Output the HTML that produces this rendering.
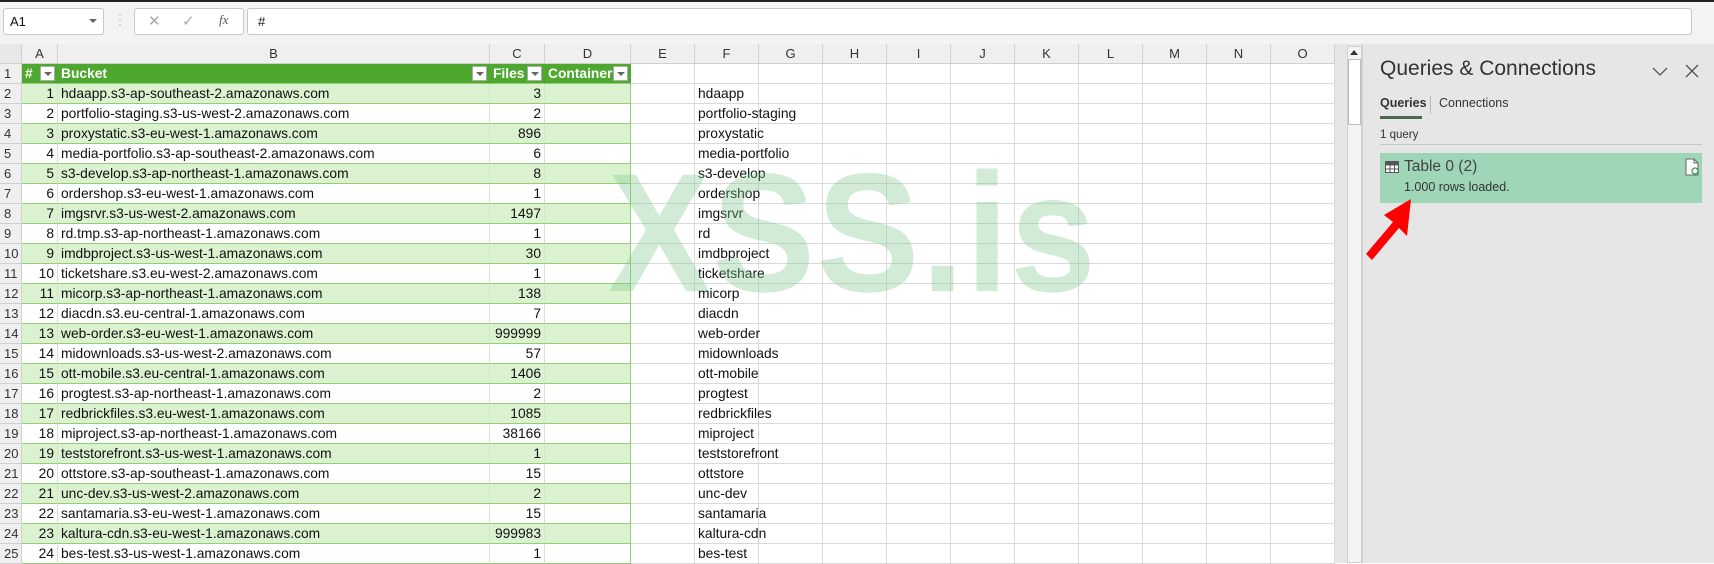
<!DOCTYPE html>
<html><head><meta charset="utf-8">
<style>
*{box-sizing:border-box;margin:0;padding:0}
body{width:1714px;height:563px;overflow:hidden;background:#fff;font-family:"Liberation Sans",sans-serif;position:relative;color:#111}
.top{position:absolute;left:0;top:0;width:1714px;height:44px;background:#f3f3f3;border-top:2px solid #222}
.box{position:absolute;background:#fff;border:1px solid #c8c8c8;border-radius:3px}
table{position:absolute;left:0;top:44px;width:1335px;border-collapse:separate;border-spacing:0;table-layout:fixed;font-size:13.8px}
td,th{height:20px;border-right:1px solid #d9d9d9;border-bottom:1px solid #d9d9d9;padding:0 3px;white-space:nowrap;overflow:hidden;font-weight:normal;line-height:19px;position:relative}
td{overflow:visible}
thead th{height:19px;background:#efefef;color:#333;font-size:13px;text-align:center;border-color:#d0d0d0}
tbody th{background:#efefef;color:#333;font-size:13px;text-align:left;padding-left:4px;border-color:#d0d0d0}
.n{text-align:right}
tr.g td.t{background:#daf2d0}
td.t{border-right-color:#cfe8c5;border-bottom-color:#8ed073}
td.t4{border-right-color:#8ed073}
tr.h td.t{background:#4ea72e;color:#fff;font-weight:bold;border-right-color:#4ea72e;overflow:hidden}
.dd{position:absolute;right:2px;top:2px;width:15px;height:15px;background:#fff;border:1px solid #aaa}
.dd:after{content:"";position:absolute;left:3px;top:5px;border-left:4px solid transparent;border-right:4px solid transparent;border-top:4px solid #666}
.wm{position:absolute;left:608px;top:135px;font-size:169px;font-weight:bold;color:rgba(130,200,140,0.36);transform:scaleX(0.91);transform-origin:0 0;letter-spacing:2px;pointer-events:none;z-index:2}
.panel{position:absolute;left:1362px;top:44px;width:352px;height:519px;background:#e6e6e6;border-left:1px solid #cfcfcf}
.gut{position:absolute;left:1335px;top:44px;width:27px;height:519px;background:#e6e6e6}
</style></head><body>
<div class="top">
  <div class="box" style="left:3px;top:6px;width:101px;height:27px"><span style="position:absolute;left:6px;top:5px;font-size:13px">A1</span><span style="position:absolute;left:85px;top:10px;border-left:4px solid transparent;border-right:4px solid transparent;border-top:4px solid #666"></span></div>
  <span style="position:absolute;left:118px;top:10px;color:#aaa;font-size:12px;line-height:5px">·<br>·<br>·</span>
  <div class="box" style="left:134px;top:6px;width:110px;height:27px;color:#aaa;font-size:15px"><span style="position:absolute;left:13px;top:3px">✕</span><span style="position:absolute;left:47px;top:3px">✓</span><span style="position:absolute;left:84px;top:3px;color:#555;font-style:italic;font-family:'Liberation Serif',serif;font-size:13px">fx</span></div>
  <div class="box" style="left:247px;top:6px;width:1445px;height:27px"><span style="position:absolute;left:10px;top:5px;font-size:13px">#</span></div>
</div>
<div class="wm">XSS.is</div>
<table>
<colgroup><col style="width:22px"><col style="width:36px"><col style="width:432px"><col style="width:55px"><col style="width:86px"><col style="width:64px"><col style="width:64px"><col style="width:64px"><col style="width:64px"><col style="width:64px"><col style="width:64px"><col style="width:64px"><col style="width:64px"><col style="width:64px"><col style="width:64px"><col style="width:64px"></colgroup>
<thead><tr><th style="background:#e8e8e8"></th><th>A</th><th>B</th><th>C</th><th>D</th><th>E</th><th>F</th><th>G</th><th>H</th><th>I</th><th>J</th><th>K</th><th>L</th><th>M</th><th>N</th><th>O</th></tr></thead>
<tbody>
<tr class="h"><th>1</th><td class="t">#<span class="dd"></span></td><td class="t">Bucket<span class="dd"></span></td><td class="t">Files<span class="dd"></span></td><td class="t">Container<span class="dd"></span></td><td></td><td></td><td></td><td></td><td></td><td></td><td></td><td></td><td></td><td></td><td></td></tr>
<tr class="g"><th>2</th><td class="t n">1</td><td class="t">hdaapp.s3-ap-southeast-2.amazonaws.com</td><td class="t n">3</td><td class="t t4"></td><td></td><td>hdaapp</td><td></td><td></td><td></td><td></td><td></td><td></td><td></td><td></td><td></td></tr>
<tr><th>3</th><td class="t n">2</td><td class="t">portfolio-staging.s3-us-west-2.amazonaws.com</td><td class="t n">2</td><td class="t t4"></td><td></td><td>portfolio-staging</td><td></td><td></td><td></td><td></td><td></td><td></td><td></td><td></td><td></td></tr>
<tr class="g"><th>4</th><td class="t n">3</td><td class="t">proxystatic.s3-eu-west-1.amazonaws.com</td><td class="t n">896</td><td class="t t4"></td><td></td><td>proxystatic</td><td></td><td></td><td></td><td></td><td></td><td></td><td></td><td></td><td></td></tr>
<tr><th>5</th><td class="t n">4</td><td class="t">media-portfolio.s3-ap-southeast-2.amazonaws.com</td><td class="t n">6</td><td class="t t4"></td><td></td><td>media-portfolio</td><td></td><td></td><td></td><td></td><td></td><td></td><td></td><td></td><td></td></tr>
<tr class="g"><th>6</th><td class="t n">5</td><td class="t">s3-develop.s3-ap-northeast-1.amazonaws.com</td><td class="t n">8</td><td class="t t4"></td><td></td><td>s3-develop</td><td></td><td></td><td></td><td></td><td></td><td></td><td></td><td></td><td></td></tr>
<tr><th>7</th><td class="t n">6</td><td class="t">ordershop.s3-eu-west-1.amazonaws.com</td><td class="t n">1</td><td class="t t4"></td><td></td><td>ordershop</td><td></td><td></td><td></td><td></td><td></td><td></td><td></td><td></td><td></td></tr>
<tr class="g"><th>8</th><td class="t n">7</td><td class="t">imgsrvr.s3-us-west-2.amazonaws.com</td><td class="t n">1497</td><td class="t t4"></td><td></td><td>imgsrvr</td><td></td><td></td><td></td><td></td><td></td><td></td><td></td><td></td><td></td></tr>
<tr><th>9</th><td class="t n">8</td><td class="t">rd.tmp.s3-ap-northeast-1.amazonaws.com</td><td class="t n">1</td><td class="t t4"></td><td></td><td>rd</td><td></td><td></td><td></td><td></td><td></td><td></td><td></td><td></td><td></td></tr>
<tr class="g"><th>10</th><td class="t n">9</td><td class="t">imdbproject.s3-us-west-1.amazonaws.com</td><td class="t n">30</td><td class="t t4"></td><td></td><td>imdbproject</td><td></td><td></td><td></td><td></td><td></td><td></td><td></td><td></td><td></td></tr>
<tr><th>11</th><td class="t n">10</td><td class="t">ticketshare.s3.eu-west-2.amazonaws.com</td><td class="t n">1</td><td class="t t4"></td><td></td><td>ticketshare</td><td></td><td></td><td></td><td></td><td></td><td></td><td></td><td></td><td></td></tr>
<tr class="g"><th>12</th><td class="t n">11</td><td class="t">micorp.s3-ap-northeast-1.amazonaws.com</td><td class="t n">138</td><td class="t t4"></td><td></td><td>micorp</td><td></td><td></td><td></td><td></td><td></td><td></td><td></td><td></td><td></td></tr>
<tr><th>13</th><td class="t n">12</td><td class="t">diacdn.s3.eu-central-1.amazonaws.com</td><td class="t n">7</td><td class="t t4"></td><td></td><td>diacdn</td><td></td><td></td><td></td><td></td><td></td><td></td><td></td><td></td><td></td></tr>
<tr class="g"><th>14</th><td class="t n">13</td><td class="t">web-order.s3-eu-west-1.amazonaws.com</td><td class="t n">999999</td><td class="t t4"></td><td></td><td>web-order</td><td></td><td></td><td></td><td></td><td></td><td></td><td></td><td></td><td></td></tr>
<tr><th>15</th><td class="t n">14</td><td class="t">midownloads.s3-us-west-2.amazonaws.com</td><td class="t n">57</td><td class="t t4"></td><td></td><td>midownloads</td><td></td><td></td><td></td><td></td><td></td><td></td><td></td><td></td><td></td></tr>
<tr class="g"><th>16</th><td class="t n">15</td><td class="t">ott-mobile.s3.eu-central-1.amazonaws.com</td><td class="t n">1406</td><td class="t t4"></td><td></td><td>ott-mobile</td><td></td><td></td><td></td><td></td><td></td><td></td><td></td><td></td><td></td></tr>
<tr><th>17</th><td class="t n">16</td><td class="t">progtest.s3-ap-northeast-1.amazonaws.com</td><td class="t n">2</td><td class="t t4"></td><td></td><td>progtest</td><td></td><td></td><td></td><td></td><td></td><td></td><td></td><td></td><td></td></tr>
<tr class="g"><th>18</th><td class="t n">17</td><td class="t">redbrickfiles.s3.eu-west-1.amazonaws.com</td><td class="t n">1085</td><td class="t t4"></td><td></td><td>redbrickfiles</td><td></td><td></td><td></td><td></td><td></td><td></td><td></td><td></td><td></td></tr>
<tr><th>19</th><td class="t n">18</td><td class="t">miproject.s3-ap-northeast-1.amazonaws.com</td><td class="t n">38166</td><td class="t t4"></td><td></td><td>miproject</td><td></td><td></td><td></td><td></td><td></td><td></td><td></td><td></td><td></td></tr>
<tr class="g"><th>20</th><td class="t n">19</td><td class="t">teststorefront.s3-us-west-1.amazonaws.com</td><td class="t n">1</td><td class="t t4"></td><td></td><td>teststorefront</td><td></td><td></td><td></td><td></td><td></td><td></td><td></td><td></td><td></td></tr>
<tr><th>21</th><td class="t n">20</td><td class="t">ottstore.s3-ap-southeast-1.amazonaws.com</td><td class="t n">15</td><td class="t t4"></td><td></td><td>ottstore</td><td></td><td></td><td></td><td></td><td></td><td></td><td></td><td></td><td></td></tr>
<tr class="g"><th>22</th><td class="t n">21</td><td class="t">unc-dev.s3-us-west-2.amazonaws.com</td><td class="t n">2</td><td class="t t4"></td><td></td><td>unc-dev</td><td></td><td></td><td></td><td></td><td></td><td></td><td></td><td></td><td></td></tr>
<tr><th>23</th><td class="t n">22</td><td class="t">santamaria.s3-eu-west-1.amazonaws.com</td><td class="t n">15</td><td class="t t4"></td><td></td><td>santamaria</td><td></td><td></td><td></td><td></td><td></td><td></td><td></td><td></td><td></td></tr>
<tr class="g"><th>24</th><td class="t n">23</td><td class="t">kaltura-cdn.s3-eu-west-1.amazonaws.com</td><td class="t n">999983</td><td class="t t4"></td><td></td><td>kaltura-cdn</td><td></td><td></td><td></td><td></td><td></td><td></td><td></td><td></td><td></td></tr>
<tr><th>25</th><td class="t n">24</td><td class="t">bes-test.s3-us-west-1.amazonaws.com</td><td class="t n">1</td><td class="t t4"></td><td></td><td>bes-test</td><td></td><td></td><td></td><td></td><td></td><td></td><td></td><td></td><td></td></tr>
</tbody></table>
<div class="gut">
  <div style="position:absolute;left:12px;top:2px;width:15px;height:517px;background:#f4f4f4;border:1px solid #d0d0d0"></div>
  <div style="position:absolute;left:15px;top:6px;border-left:4px solid transparent;border-right:4px solid transparent;border-bottom:5px solid #333"></div>
  <div style="position:absolute;left:13px;top:15px;width:13px;height:66px;background:#fff;border:1px solid #bbb"></div>
</div>
<div class="panel">
  <div style="position:absolute;left:17px;top:13px;font-size:21px;color:#333">Queries &amp; Connections</div>
  <svg style="position:absolute;left:289px;top:23px" width="16" height="10"><path d="M1 1 L8 8 L15 1" stroke="#555" stroke-width="1.3" fill="none"/></svg>
  <svg style="position:absolute;left:322px;top:20px" width="14" height="14"><path d="M1 1 L13 13 M13 1 L1 13" stroke="#555" stroke-width="1.3"/></svg>
  <div style="position:absolute;left:17px;top:52px;font-size:12.5px;color:#333;font-weight:bold">Queries</div>
  <div style="position:absolute;left:17px;top:72px;width:42px;height:3px;background:#4a6a50"></div>
  <div style="position:absolute;left:67px;top:52px;width:1px;height:18px;background:#bbb"></div>
  <div style="position:absolute;left:76px;top:52px;font-size:12.5px;color:#333">Connections</div>
  <div style="position:absolute;left:17px;top:85px;font-size:11.5px;color:#333">1 query</div>
  <div style="position:absolute;left:17px;top:100px;width:322px;height:1px;background:#c8c8c8"></div>
  <div style="position:absolute;left:17px;top:109px;width:322px;height:50px;background:#9fd6b7">
    <svg style="position:absolute;left:5px;top:8px" width="14" height="12"><rect x="0.5" y="0.5" width="13" height="11" fill="#fff" stroke="#555"/><path d="M0 4H14M0 8H14M5 0V12M9.5 0V12" stroke="#555" stroke-width="1"/><rect x="0.5" y="0.5" width="13" height="3" fill="#555"/></svg>
    <div style="position:absolute;left:24px;top:5px;font-size:15.5px;color:#444">Table 0 (2)</div>
    <div style="position:absolute;left:24px;top:27px;font-size:12.5px;color:#333">1.000 rows loaded.</div>
    <svg style="position:absolute;left:305px;top:5px" width="14" height="18"><path d="M1 1H9L13 5V17H1Z" fill="#fff" stroke="#666"/><path d="M9 1V5H13" fill="none" stroke="#666"/><circle cx="10" cy="13" r="3" fill="none" stroke="#3a9a5a" stroke-width="1.3"/></svg>
  </div>
  <svg style="position:absolute;left:0;top:140px" width="80" height="80"><path d="M48 15 L44 52 L36 44 L9 76 L3 70 L30 38 L21 31 Z" fill="#ff0000"/></svg>
</div>
</body></html>
